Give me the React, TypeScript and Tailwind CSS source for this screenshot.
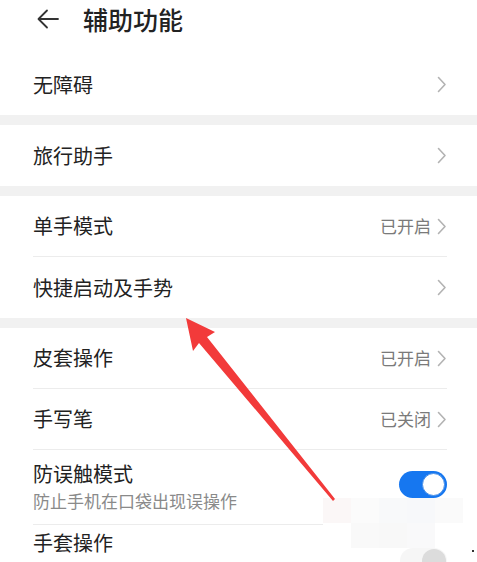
import React from 'react';

const FONT = { fontFamily: '"Noto Sans CJK SC", "Noto Sans", sans-serif' };

const Chevron = () => (
  <svg width="10" height="17" viewBox="0 0 10 17" className="ml-[6px]">
    <path d="M1.5 1.5 L8 8.5 L1.5 15.5" fill="none" stroke="#b3b3b3" strokeWidth="1.6" strokeLinecap="round" strokeLinejoin="round" />
  </svg>
);

const Row: React.FC<{ title: string; value?: string; divider?: boolean }> = ({ title, value, divider }) => (
  <div className="px-[33px] pr-[30px]">
    <div className={`h-[61px] flex items-center justify-between ${divider ? 'border-b border-[#ececec]' : ''}`}>
      <span className="text-[20px] text-[#222]">{title}</span>
      <div className="flex items-center">
        {value && <span className="text-[17px] text-[#7a7a7a]">{value}</span>}
        <Chevron />
      </div>
    </div>
  </div>
);

const Gap = () => <div className="h-[10px] bg-[#f1f1f1]" />;

export default function App() {
  return (
    <div className="relative w-[477px] h-[562px] overflow-hidden bg-white" style={FONT}>
      {/* 标题栏 */}
      <div className="h-[55px] flex items-start pt-[3px] px-[36px]">
        <svg width="24" height="22" viewBox="0 0 24 22" className="mt-[5px]">
          <path d="M22 11 H3 M11 2.5 L2.5 11 L11 19.5" fill="none" stroke="#333" strokeWidth="1.8" strokeLinecap="round" strokeLinejoin="round" />
        </svg>
        <span className="ml-[23px] text-[25px] leading-[32px] font-medium text-[#222]">辅助功能</span>
      </div>

      <div className="-mt-[1px]">
        <Row title="无障碍" />
      </div>
      <Gap />
      <Row title="旅行助手" />
      <Gap />
      <Row title="单手模式" value="已开启" divider />
      <Row title="快捷启动及手势" />
      <Gap />
      <Row title="皮套操作" value="已开启" divider />
      <Row title="手写笔" value="已关闭" divider />

      <div className="px-[33px] pr-[30px]">
        <div className="h-[75px] flex items-center justify-between border-b border-[#ececec]">
          <div className="flex flex-col">
            <span className="text-[20px] leading-[26px] text-[#222]">防误触模式</span>
            <span className="text-[17px] leading-[24px] text-[#8a8a8a] mt-[2px]">防止手机在口袋出现误操作</span>
          </div>
          <div className="w-[48px] h-[27px] rounded-full bg-[#1677f0] flex items-center justify-end pr-[2px] -mt-[6px]">
            <div className="w-[23px] h-[23px] rounded-full bg-white border border-[#4a90e8]" />
          </div>
        </div>
        <div className="h-[35px] flex items-center">
          <span className="text-[20px] leading-[21px] text-[#222]">手套操作</span>
        </div>
      </div>

      {/* 马赛克遮挡 */}
      <div className="absolute left-[323px] top-[498px] w-[140px] h-[50px] grid grid-cols-5 grid-rows-2">
        <div className="bg-[#fbf7f7]" />
        <div className="bg-[#fbfbfb]" />
        <div className="bg-[#f8f9fa]" />
        <div className="bg-[#f7f8fa]" />
        <div className="bg-[#fafafa]" />
        <div className="bg-white" />
        <div className="bg-[#f9f9f9]" />
        <div className="bg-[#f8f8f8]" />
        <div className="bg-[#f9f9fa]" />
        <div className="bg-white" />
      </div>
      <div className="absolute left-[400px] top-[548px] w-[47px] h-[26px] rounded-full bg-[#f6f6f6] flex items-center justify-end pr-[1px]">
        <div className="w-[24px] h-[24px] rounded-full bg-[#dcdcdc]" />
      </div>
      <div className="absolute left-[472px] top-[550px] w-[2px] h-[2px] bg-[#333]" />

      {/* 红色箭头 */}
      <svg className="absolute left-0 top-0 pointer-events-none" width="477" height="562" viewBox="0 0 477 562">
        <polygon
          points="186,318 215,332 207,337 335,499 333,501 199,343 193,351"
          fill="#f23a3a"
        />
      </svg>
    </div>
  );
}
